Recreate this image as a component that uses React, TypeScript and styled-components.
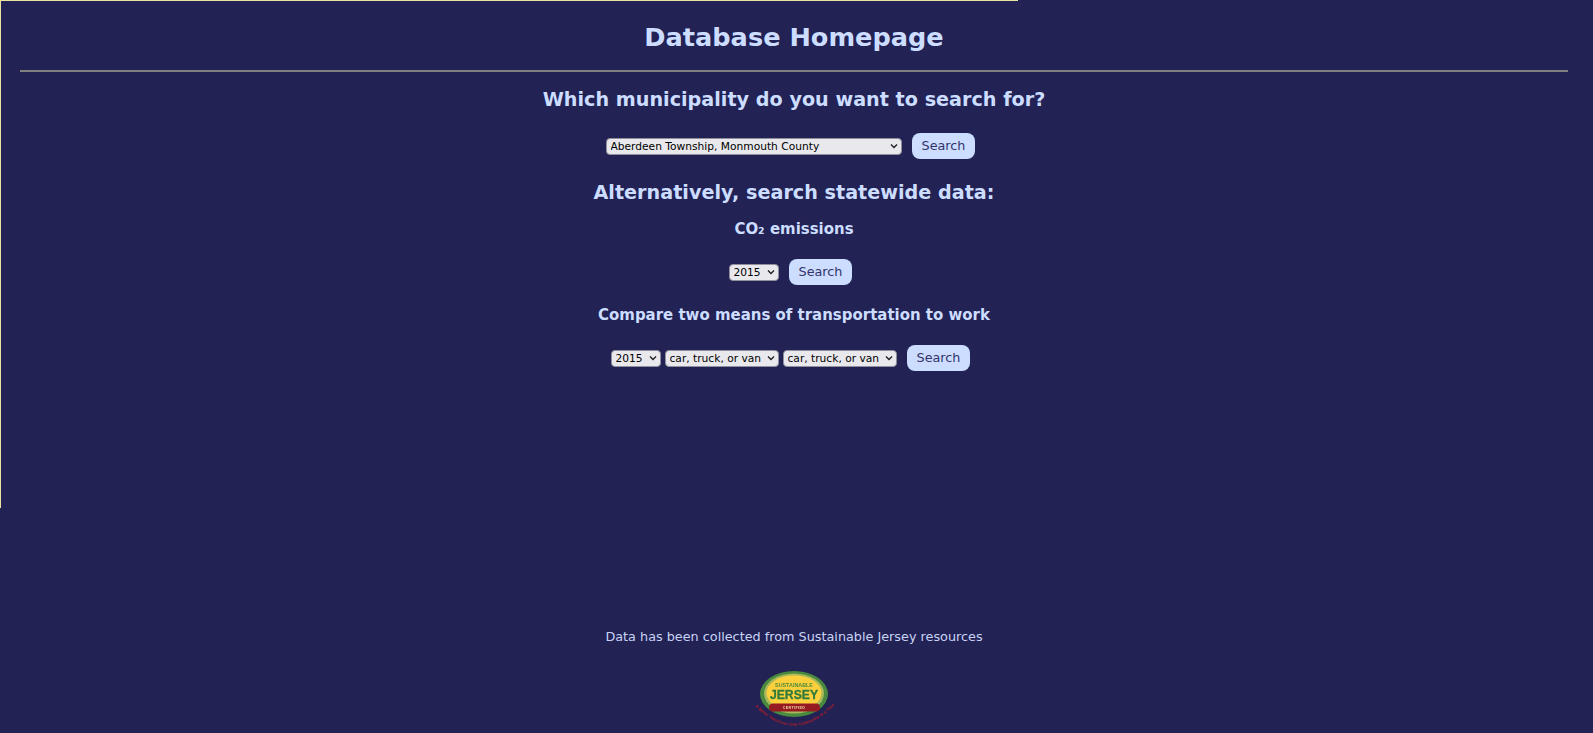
import React from "react";
import styled, { createGlobalStyle } from "styled-components";

const chevron =
  "data:image/svg+xml," +
  encodeURIComponent(
    '<svg xmlns="http://www.w3.org/2000/svg" width="8" height="6" viewBox="0 0 8 6"><path d="M1 1.5 L4 4.5 L7 1.5" fill="none" stroke="#222" stroke-width="1.4"/></svg>'
  );

const Global = createGlobalStyle`
  html, body { margin: 0; padding: 0; background: #222255; height: 100%; overflow: hidden; }
  body { font-family: "DejaVu Sans", sans-serif; color: #ccddff; }
  #root { height: 100%; }
`;

const Page = styled.div`
  position: relative;
  height: 733px;
  padding: 21px 25px 0 20px;
  box-sizing: border-box;
  text-align: center;
`;

const Edge = styled.div`
  position: absolute;
  left: 0;
  top: 0;
  width: 1018px;
  height: 508px;
  box-sizing: border-box;
  border-top: 1px solid #e8e4a0;
  border-left: 1px solid #e8e4a0;
  pointer-events: none;
`;

const Title = styled.h1`
  margin: 0;
  font-size: 25.6px;
  line-height: 33px;
  font-weight: 700;
`;

const Rule = styled.hr`
  margin: 16px 0 0;
  border: 0;
  border-top: 2px solid #808080;
  height: 0;
`;

const Heading = styled.h2<{ $top: number }>`
  margin: ${(p) => p.$top}px 0 0;
  font-size: 19.2px;
  line-height: 26px;
  font-weight: 700;
`;

const SubHeading = styled.h3<{ $top: number }>`
  margin: ${(p) => p.$top}px 0 0;
  font-size: 14.976px;
  line-height: 20px;
  font-weight: 700;
`;

const Row = styled.form<{ $top: number }>`
  margin: ${(p) => p.$top}px 0 0;
  display: flex;
  justify-content: center;
  align-items: center;
  height: 26px;
  gap: 4px;
`;

const Select = styled.select<{ $w: number }>`
  appearance: none;
  width: ${(p) => p.$w}px;
  height: 17px;
  box-sizing: border-box;
  padding: 0 12px 0 4px;
  border: 1px solid #8f8f9d;
  border-radius: 4px;
  background: #e9e9ed url("${chevron}") no-repeat right 3px center;
  color: #000;
  font-family: "DejaVu Sans", sans-serif;
  font-size: 10.67px;
`;

const Button = styled.button`
  margin: 0 8px 0 6px;
  width: 63px;
  height: 26px;
  padding: 0 0 2px 1px;
  border: 0;
  border-radius: 8px;
  background: #ccddff;
  color: #33336a;
  font-family: "DejaVu Sans", sans-serif;
  font-size: 12.8px;
`;

const Note = styled.p`
  margin: 257px 0 0;
  color: #c8d4f4;
  font-size: 12.8px;
  line-height: 18px;
`;

const Logo = styled.svg`
  display: block;
  margin: 23px auto 0;
  filter: blur(0.5px);
`;

const years = ["2015"];
const modes = ["car, truck, or van"];

export default function App() {
  return (
    <Page>
      <Global />
      <Edge />
      <Title>Database Homepage</Title>
      <Rule />
      <Heading $top={15}>Which municipality do you want to search for?</Heading>
      <Row $top={20}>
        <Select $w={296}><option>Aberdeen Township, Monmouth County</option></Select>
        <Button>Search</Button>
      </Row>
      <Heading $top={21}>Alternatively, search statewide data:</Heading>
      <SubHeading $top={13}>CO₂ emissions</SubHeading>
      <Row $top={20}>
        <Select $w={50}>{years.map((y) => <option key={y}>{y}</option>)}</Select>
        <Button>Search</Button>
      </Row>
      <SubHeading $top={20}>Compare two means of transportation to work</SubHeading>
      <Row $top={20}>
        <Select $w={50}>{years.map((y) => <option key={y}>{y}</option>)}</Select>
        <Select $w={114}>{modes.map((m) => <option key={m}>{m}</option>)}</Select>
        <Select $w={114}>{modes.map((m) => <option key={m}>{m}</option>)}</Select>
        <Button>Search</Button>
      </Row>
      <Note>Data has been collected from Sustainable Jersey resources</Note>
      <Logo width="84" height="62" viewBox="0 0 84 62">
        <defs>
          <path id="arc" d="M2 36 Q42 78 84 35" fill="none" />
        </defs>
        <ellipse cx="42" cy="25" rx="34" ry="23" fill="#4a8a3e" />
        <ellipse cx="42" cy="24.5" rx="30" ry="20" fill="#a9b95a" />
        <ellipse cx="42" cy="24" rx="27.5" ry="17.5" fill="#fcd03c" />
        <text x="42" y="17.5" textAnchor="middle" fontFamily="Liberation Sans" fontSize="5.4" fontWeight="700" fill="#4a8a3a">SUSTAINABLE</text>
        <text x="42" y="30" textAnchor="middle" fontFamily="Liberation Sans" fontSize="12.2" fontWeight="700" stroke="#2f7a3a" strokeWidth="0.3" fill="#2f7a3a">JERSEY</text>
        <rect x="17" y="34.5" width="51" height="8" rx="4" fill="#951a22" />
        <text x="42" y="40" textAnchor="middle" fontFamily="Liberation Sans" fontSize="3.6" fontWeight="700" letterSpacing="0.4" fill="#f3d7a0">CERTIFIED</text>
        <text fontFamily="Liberation Sans" fontSize="4.2" fontWeight="700" fill="#b01c26">
          <textPath href="#arc" startOffset="50%" textAnchor="middle">A Better Tomorrow, One Community at a Time</textPath>
        </text>
      </Logo>
    </Page>
  );
}
